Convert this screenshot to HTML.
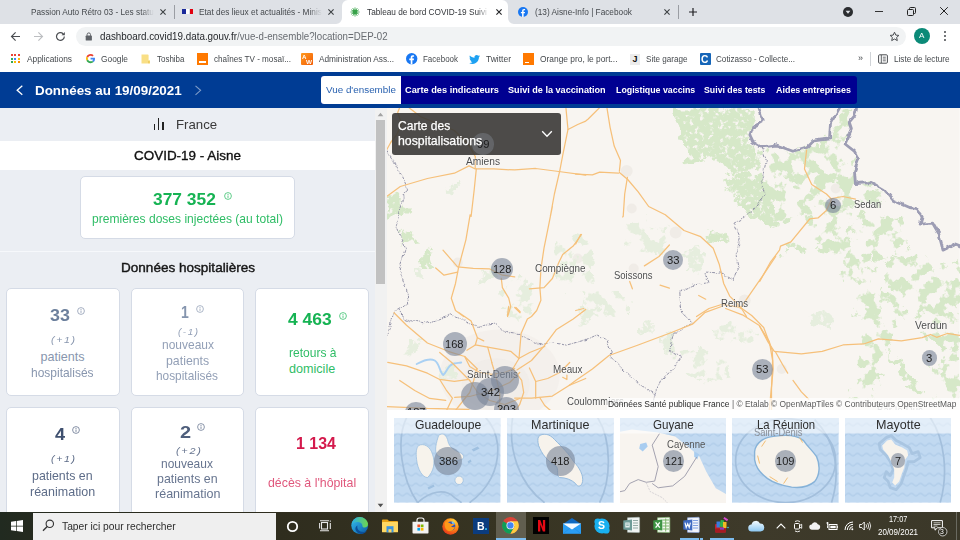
<!DOCTYPE html>
<html><head><meta charset="utf-8">
<style>
*{box-sizing:border-box;margin:0;padding:0}
html,body{width:960px;height:540px;overflow:hidden;background:#fff;font-family:"Liberation Sans",sans-serif;}
.a{position:absolute}
.t{position:absolute;white-space:nowrap;line-height:1}
.card{position:absolute;background:#fff;border:1px solid #d5dbe6;border-radius:5px}
.bub{position:absolute;border-radius:50%;background:rgba(122,134,154,.62)}
svg{overflow:visible}
</style></head><body>

<!-- ===== 10_chrome ===== -->
<div class="a" style="left:0px;top:0px;width:960px;height:24px;background:#dee1e6;"></div>
<div class="a" style="left:342px;top:0px;width:166px;height:24px;background:#fff;border-radius:6px 6px 0 0"></div>
<svg class="a" style="left:336px;top:18px;" width="6" height="6" viewBox="0 0 6 6"><path d="M6 0 V6 H0 A6 6 0 0 0 6 0Z" fill="#fff"/></svg>
<svg class="a" style="left:508px;top:18px;" width="6" height="6" viewBox="0 0 6 6"><path d="M0 0 V6 H6 A6 6 0 0 1 0 0Z" fill="#fff"/></svg>
<div class="t" style="left:31.00px;top:7.92px;font-size:8.6px;color:#45494d;transform:scaleX(0.9600);transform-origin:0 0;">Passion Auto Rétro 03 - Les statu</div>
<div class="a" style="left:141px;top:4px;width:13px;height:16px;background:linear-gradient(90deg,rgba(222,225,230,0),rgba(222,225,230,1));"></div>
<svg class="a" style="left:159px;top:8px;" width="8" height="8" viewBox="0 0 8 8"><path d="M1.4 1.4 L6.6 6.6 M6.6 1.4 L1.4 6.6" stroke="#3c4043" stroke-width="1.1" fill="none"/></svg>
<div class="a" style="left:173.5px;top:5px;width:1px;height:14px;background:#9a9da3;"></div>
<div class="a" style="left:182px;top:9.3px;width:4.2px;height:4.8px;background:#1b2a9a;"></div>
<div class="a" style="left:186.2px;top:9.3px;width:3.3px;height:4.8px;background:#fff;"></div>
<div class="a" style="left:189.5px;top:9.3px;width:3.9px;height:4.8px;background:#e1000f;"></div>
<div class="t" style="left:199.30px;top:7.92px;font-size:8.6px;color:#45494d;transform:scaleX(0.9638);transform-origin:0 0;">Etat des lieux et actualités - Minis</div>
<div class="a" style="left:309px;top:4px;width:13px;height:16px;background:linear-gradient(90deg,rgba(222,225,230,0),rgba(222,225,230,1));"></div>
<svg class="a" style="left:327px;top:8px;" width="8" height="8" viewBox="0 0 8 8"><path d="M1.4 1.4 L6.6 6.6 M6.6 1.4 L1.4 6.6" stroke="#3c4043" stroke-width="1.1" fill="none"/></svg>
<svg class="a" style="left:350.3px;top:7px;" width="10" height="10" viewBox="0 0 10 10"><line x1="5" y1="5" x2="9.60" y2="5.00" stroke="#3aa64a" stroke-width="0.8"/><line x1="5" y1="5" x2="8.98" y2="7.30" stroke="#3aa64a" stroke-width="0.8"/><line x1="5" y1="5" x2="7.30" y2="8.98" stroke="#3aa64a" stroke-width="0.8"/><line x1="5" y1="5" x2="5.00" y2="9.60" stroke="#3aa64a" stroke-width="0.8"/><line x1="5" y1="5" x2="2.70" y2="8.98" stroke="#3aa64a" stroke-width="0.8"/><line x1="5" y1="5" x2="1.02" y2="7.30" stroke="#3aa64a" stroke-width="0.8"/><line x1="5" y1="5" x2="0.40" y2="5.00" stroke="#3aa64a" stroke-width="0.8"/><line x1="5" y1="5" x2="1.02" y2="2.70" stroke="#3aa64a" stroke-width="0.8"/><line x1="5" y1="5" x2="2.70" y2="1.02" stroke="#3aa64a" stroke-width="0.8"/><line x1="5" y1="5" x2="5.00" y2="0.40" stroke="#3aa64a" stroke-width="0.8"/><line x1="5" y1="5" x2="7.30" y2="1.02" stroke="#3aa64a" stroke-width="0.8"/><line x1="5" y1="5" x2="8.98" y2="2.70" stroke="#3aa64a" stroke-width="0.8"/><circle cx="5" cy="5" r="2.4" fill="#37a148"/></svg>
<div class="t" style="left:367.30px;top:7.92px;font-size:8.6px;color:#33363a;transform:scaleX(0.9618);transform-origin:0 0;">Tableau de bord COVID-19 Suivi</div>
<div class="a" style="left:477px;top:4px;width:12px;height:16px;background:linear-gradient(90deg,rgba(255,255,255,0),rgba(255,255,255,1));"></div>
<svg class="a" style="left:495px;top:8px;" width="8" height="8" viewBox="0 0 8 8"><path d="M1.4 1.4 L6.6 6.6 M6.6 1.4 L1.4 6.6" stroke="#202124" stroke-width="1.1" fill="none"/></svg>
<svg class="a" style="left:518px;top:7px;" width="10" height="10" viewBox="0 0 10 10"><circle cx="5" cy="5" r="5" fill="#1877f2"/><path d="M5.6 10V6.3h1.2l.2-1.4H5.6V4c0-.4.1-.7.7-.7h.8V2.1c-.1 0-.6-.1-1.1-.1-1.1 0-1.9.7-1.9 1.9v1H2.9v1.4h1.2V10z" fill="#fff"/></svg>
<div class="t" style="left:535.00px;top:7.92px;font-size:8.6px;color:#45494d;transform:scaleX(0.9631);transform-origin:0 0;">(13) Aisne-Info | Facebook</div>
<svg class="a" style="left:663px;top:8px;" width="8" height="8" viewBox="0 0 8 8"><path d="M1.4 1.4 L6.6 6.6 M6.6 1.4 L1.4 6.6" stroke="#3c4043" stroke-width="1.1" fill="none"/></svg>
<div class="a" style="left:677.5px;top:5px;width:1px;height:14px;background:#9a9da3;"></div>
<svg class="a" style="left:688px;top:7px;" width="10" height="10" viewBox="0 0 10 10"><path d="M5 1V9M1 5H9" stroke="#202124" stroke-width="1.2"/></svg>
<svg class="a" style="left:843px;top:7px;" width="10" height="10" viewBox="0 0 10 10"><circle cx="5" cy="5" r="5" fill="#2b2d30"/><path d="M2.6 3.8h4.8L5 6.8z" fill="#dee1e6"/></svg>
<div class="a" style="left:875px;top:10.5px;width:8px;height:1px;background:#333;"></div>
<svg class="a" style="left:906px;top:6px;" width="11" height="11" viewBox="0 0 11 11"><rect x="1.5" y="3.5" width="6" height="6" rx="1" fill="none" stroke="#222" stroke-width="1"/><path d="M3.5 3.5V2.5a1 1 0 0 1 1-1H8.5a1 1 0 0 1 1 1V6.5a1 1 0 0 1-1 1H7.5" fill="none" stroke="#222" stroke-width="1"/></svg>
<svg class="a" style="left:939.5px;top:6.5px;" width="8" height="8" viewBox="0 0 8 8"><path d="M0.20000000000000018 0.20000000000000018 L7.8 7.8 M7.8 0.20000000000000018 L0.20000000000000018 7.8" stroke="#222" stroke-width="1" fill="none"/></svg>
<div class="a" style="left:0px;top:24px;width:960px;height:24px;background:#fff;"></div>
<div class="a" style="left:76px;top:26.6px;width:830px;height:19.5px;background:#f1f3f4;border-radius:10px"></div>
<svg class="a" style="left:10px;top:31px;" width="11" height="11" viewBox="0 0 11 11"><path d="M10 5.5H1.8M5.6 1.4L1.5 5.5l4.1 4.1" fill="none" stroke="#4a4d51" stroke-width="1.15"/></svg>
<svg class="a" style="left:33px;top:31px;" width="11" height="11" viewBox="0 0 11 11"><path d="M1 5.5H9.2M5.4 1.4L9.5 5.5 5.4 9.6" fill="none" stroke="#bcbec1" stroke-width="1.15"/></svg>
<svg class="a" style="left:55px;top:31px;" width="11" height="11" viewBox="0 0 11 11"><path d="M9.3 5.5a3.9 3.9 0 1 1-1.2-2.8" fill="none" stroke="#4a4d51" stroke-width="1.2"/><path d="M9.8 1v3.3H6.5z" fill="#4a4d51"/></svg>
<svg class="a" style="left:85px;top:31.5px;" width="8" height="9" viewBox="0 0 8 9"><rect x="0.7" y="3.6" width="6.2" height="5" rx=".7" fill="#5f6368"/><path d="M2.1 3.8V2.6a1.7 1.7 0 0 1 3.4 0v1.2" fill="none" stroke="#5f6368" stroke-width="1"/></svg>
<div class="t" style="left:100.00px;top:31.03px;font-size:10.6px;color:#25282c;transform:scaleX(0.9274);transform-origin:0 0;">dashboard.covid19.data.gouv.fr</div>
<div class="t" style="left:237.30px;top:31.03px;font-size:10.6px;color:#686c71;transform:scaleX(0.9150);transform-origin:0 0;">/vue-d-ensemble?location=DEP-02</div>
<svg class="a" style="left:888.5px;top:30.5px;" width="11" height="11" viewBox="0 0 11 11"><path d="M5.5 1.2l1.3 2.9 3.1.3-2.3 2.1.7 3.1-2.8-1.6-2.8 1.6.7-3.1L1.1 4.4l3.1-.3z" fill="none" stroke="#4a4d51" stroke-width="1"/></svg>
<svg class="a" style="left:914px;top:28px;" width="16" height="16" viewBox="0 0 16 16"><circle cx="8" cy="8" r="8" fill="#0b8a78"/></svg>
<div class="t" style="left:919.30px;top:32.23px;font-size:8px;color:#fff;transform:scaleX(1.0119);transform-origin:0 0;">A</div>
<div class="a" style="left:944px;top:31.4px;width:1.8px;height:1.8px;background:#4a4d51;border-radius:50%"></div>
<div class="a" style="left:944px;top:35.2px;width:1.8px;height:1.8px;background:#4a4d51;border-radius:50%"></div>
<div class="a" style="left:944px;top:39px;width:1.8px;height:1.8px;background:#4a4d51;border-radius:50%"></div>
<div class="a" style="left:0px;top:48px;width:960px;height:23px;background:#fff;"></div>
<div class="a" style="left:10.8px;top:54.3px;width:2.2px;height:2.2px;background:#ea4335;"></div>
<div class="a" style="left:14.3px;top:54.3px;width:2.2px;height:2.2px;background:#ea4335;"></div>
<div class="a" style="left:17.8px;top:54.3px;width:2.2px;height:2.2px;background:#ea4335;"></div>
<div class="a" style="left:10.8px;top:57.699999999999996px;width:2.2px;height:2.2px;background:#34a853;"></div>
<div class="a" style="left:14.3px;top:57.699999999999996px;width:2.2px;height:2.2px;background:#4285f4;"></div>
<div class="a" style="left:17.8px;top:57.699999999999996px;width:2.2px;height:2.2px;background:#fbbc04;"></div>
<div class="a" style="left:10.8px;top:61.099999999999994px;width:2.2px;height:2.2px;background:#34a853;"></div>
<div class="a" style="left:14.3px;top:61.099999999999994px;width:2.2px;height:2.2px;background:#fbbc04;"></div>
<div class="a" style="left:17.8px;top:61.099999999999994px;width:2.2px;height:2.2px;background:#fb8c00;"></div>
<div class="t" style="left:27.00px;top:55.05px;font-size:8.8px;color:#45494d;transform:scaleX(0.9483);transform-origin:0 0;">Applications</div>
<svg class="a" style="left:85.5px;top:54.3px;" width="9.2" height="9.2" viewBox="0 0 48 48"><path fill="#EA4335" d="M24 9.5c3.540 0 6.710 1.220 9.210 3.600l6.850-6.850C35.900 2.380 30.470 0 24 0 14.620 0 6.510 5.380 2.560 13.220l7.980 6.190C12.430 13.720 17.740 9.500 24 9.500z"/><path fill="#4285F4" d="M46.980 24.550c0-1.570-.15-3.090-.38-4.550H24v9.020h12.940c-.58 2.960-2.260 5.480-4.780 7.180l7.730 6c4.510-4.180 7.090-10.360 7.090-17.650z"/><path fill="#FBBC05" d="M10.530 28.590c-.48-1.450-.76-2.990-.76-4.590s.27-3.140.76-4.590l-7.980-6.190C.92 16.460 0 20.120 0 24c0 3.880.92 7.540 2.560 10.780l7.970-6.190z"/><path fill="#34A853" d="M24 48c6.480 0 11.930-2.130 15.890-5.810l-7.730-6c-2.150 1.450-4.920 2.300-8.160 2.300-6.260 0-11.570-4.220-13.470-9.910l-7.980 6.190C6.510 42.620 14.620 48 24 48z"/></svg>
<div class="t" style="left:101.00px;top:55.05px;font-size:8.8px;color:#45494d;transform:scaleX(0.9515);transform-origin:0 0;">Google</div>
<svg class="a" style="left:141px;top:54px;" width="9" height="10" viewBox="0 0 9 10"><path d="M0.5 0.5h6.3a.8.8 0 0 1 .8.8V6.2H9V9.5H.5z" fill="#f9df85"/><path d="M7.2 7h1.4v2.2H7.2z" fill="#edc95a"/></svg>
<div class="t" style="left:157.00px;top:55.05px;font-size:8.8px;color:#45494d;transform:scaleX(0.9066);transform-origin:0 0;">Toshiba</div>
<div class="a" style="left:197px;top:53.3px;width:11px;height:11.4px;background:#ff7900;"></div>
<div class="a" style="left:199px;top:61px;width:7px;height:1.6px;background:#fff;"></div>
<div class="t" style="left:214.00px;top:55.05px;font-size:8.8px;color:#45494d;transform:scaleX(0.9225);transform-origin:0 0;">chaînes TV - mosaï...</div>
<div class="a" style="left:301.3px;top:53.3px;width:11.7px;height:11.4px;background:linear-gradient(135deg,#ff9a1f,#f25c05);border-radius:1px"></div>
<div class="t" style="left:302.40px;top:54.22px;font-size:6px;color:#fff;font-weight:bold;transform:scaleX(1.0154);transform-origin:0 0;">A</div>
<div class="t" style="left:305.60px;top:58.72px;font-size:6px;color:#fff;font-weight:bold;transform:scaleX(1.0595);transform-origin:0 0;">W</div>
<div class="t" style="left:319.00px;top:55.05px;font-size:8.8px;color:#45494d;transform:scaleX(0.9408);transform-origin:0 0;">Administration Ass...</div>
<svg class="a" style="left:405.6px;top:53.3px;" width="11.4" height="11.4" viewBox="0 0 11.4 11.4"><circle cx="5.7" cy="5.7" r="5.7" fill="#1877f2"/><path d="M6.4 11.4V7.2h1.4l.2-1.6H6.4V4.6c0-.5.1-.8.8-.8h.9V2.4c-.2 0-.7-.1-1.3-.1-1.3 0-2.1.8-2.1 2.2v1.1H3.3v1.6h1.4v4.2z" fill="#fff"/></svg>
<div class="t" style="left:422.50px;top:55.05px;font-size:8.8px;color:#45494d;transform:scaleX(0.9056);transform-origin:0 0;">Facebook</div>
<svg class="a" style="left:469px;top:54.5px;" width="11" height="9" viewBox="0 0 11 9"><path d="M11 1.1c-.4.2-.8.3-1.3.4.5-.3.8-.7 1-1.2-.4.3-.9.4-1.4.5A2.2 2.2 0 0 0 5.500 2.800C3.600 2.700 2 1.800.9.500c-.6 1-.3 2.300.7 3-.4 0-.7-.1-1-.3 0 1.100.8 2 1.800 2.200-.3.100-.7.100-1 0 .3.900 1.100 1.500 2.100 1.500A4.500 4.500 0 0 1 .2 7.900 6.300 6.300 0 0 0 3.600 8.900c4.100 0 6.400-3.500 6.300-6.600.4-.3.800-.7 1.100-1.200z" fill="#1da1f2"/></svg>
<div class="t" style="left:486.00px;top:55.05px;font-size:8.8px;color:#45494d;transform:scaleX(0.9647);transform-origin:0 0;">Twitter</div>
<div class="a" style="left:523px;top:53.3px;width:11px;height:11.4px;background:#ff7900;"></div>
<div class="a" style="left:524.5px;top:62px;width:4px;height:1px;background:#fff;"></div>
<div class="t" style="left:539.50px;top:55.05px;font-size:8.8px;color:#45494d;transform:scaleX(0.9544);transform-origin:0 0;">Orange pro, le port...</div>
<div class="a" style="left:629.5px;top:53.5px;width:10.5px;height:11px;background:#ececec;"></div>
<div class="t" style="left:632.50px;top:54.78px;font-size:9px;color:#111;font-weight:bold;">J</div>
<div class="t" style="left:646.00px;top:55.05px;font-size:8.8px;color:#45494d;transform:scaleX(0.9220);transform-origin:0 0;">Site garage</div>
<div class="a" style="left:699.5px;top:53.3px;width:11px;height:11.4px;background:#1565b8;border-radius:1px"></div>
<div class="t" style="left:701.30px;top:54.11px;font-size:10.5px;color:#fff;font-weight:bold;transform:scaleX(0.9759);transform-origin:0 0;">C</div>
<div class="t" style="left:716.00px;top:55.05px;font-size:8.8px;color:#45494d;transform:scaleX(0.9230);transform-origin:0 0;">Cotizasso - Collecte...</div>
<div class="t" style="left:857.50px;top:53.46px;font-size:9.5px;color:#45494d;transform:scaleX(0.9463);transform-origin:0 0;">»</div>
<div class="a" style="left:870px;top:52px;width:1px;height:14px;background:#d0d3d7;"></div>
<svg class="a" style="left:877.5px;top:54px;" width="10" height="10" viewBox="0 0 10 10"><rect x=".6" y=".8" width="8.8" height="8.4" rx="1" fill="none" stroke="#4a4d51" stroke-width="1"/><path d="M3.3 1V9" stroke="#4a4d51" stroke-width=".9"/><path d="M4.8 3.200h3M4.800 5h3M4.800 6.800h3" stroke="#4a4d51" stroke-width=".8"/></svg>
<div class="t" style="left:894.00px;top:55.05px;font-size:8.8px;color:#45494d;transform:scaleX(0.9300);transform-origin:0 0;">Liste de lecture</div>

<!-- ===== 20_header ===== -->
<div class="a" style="left:0px;top:71px;width:960px;height:1px;background:#fff;"></div>
<div class="a" style="left:0px;top:72px;width:960px;height:35.5px;background:#003c94;"></div>
<svg class="a" style="left:16px;top:85px;" width="8" height="11" viewBox="0 0 8 11"><path d="M6.3 0.8L1.2 5.3l5.100 4.500" fill="none" stroke="#fff" stroke-width="1.3"/></svg>
<svg class="a" style="left:194px;top:85px;" width="8" height="11" viewBox="0 0 8 11"><path d="M1.500 0.8L6.600 5.300l-5.100 4.500" fill="none" stroke="#7f9dc9" stroke-width="1.1"/></svg>
<div class="t" style="left:35.00px;top:83.80px;font-size:13px;color:#fff;font-weight:bold;transform:scaleX(1.0305);transform-origin:0 0;">Données au 19/09/2021</div>
<div class="a" style="left:321px;top:75.6px;width:535.5px;height:28.6px;background:#000091;border-radius:3px"></div>
<div class="a" style="left:321.3px;top:75.6px;width:79.5px;height:28.6px;background:#fff;border-radius:3px 0 0 3px"></div>
<div class="t" style="left:326.00px;top:85.37px;font-size:9.6px;color:#2a62b0;transform:scaleX(1.0265);transform-origin:0 0;">Vue d'ensemble</div>
<div class="t" style="left:405.00px;top:85.37px;font-size:9.6px;color:#fff;font-weight:bold;transform:scaleX(0.9627);transform-origin:0 0;">Carte des indicateurs</div>
<div class="t" style="left:508.30px;top:85.37px;font-size:9.6px;color:#fff;font-weight:bold;transform:scaleX(0.9488);transform-origin:0 0;">Suivi de la vaccination</div>
<div class="t" style="left:615.70px;top:85.37px;font-size:9.6px;color:#fff;font-weight:bold;transform:scaleX(0.9176);transform-origin:0 0;">Logistique vaccins</div>
<div class="t" style="left:704.30px;top:85.37px;font-size:9.6px;color:#fff;font-weight:bold;transform:scaleX(0.9133);transform-origin:0 0;">Suivi des tests</div>
<div class="t" style="left:775.70px;top:85.37px;font-size:9.6px;color:#fff;font-weight:bold;transform:scaleX(0.9309);transform-origin:0 0;">Aides entreprises</div>

<!-- ===== 30_left ===== -->
<div class="a" style="left:0px;top:107.5px;width:375px;height:405px;background:#ebeef3;"></div>
<div class="a" style="left:153.7px;top:124px;width:1.4px;height:6.2px;background:#222;"></div>
<div class="a" style="left:158px;top:118.3px;width:1.4px;height:11.9px;background:#222;"></div>
<div class="a" style="left:162.4px;top:122px;width:1.4px;height:8.2px;background:#222;"></div>
<div class="t" style="left:175.50px;top:118.96px;font-size:12.8px;color:#3a3a3a;transform:scaleX(1.0342);transform-origin:0 0;">France</div>
<div class="a" style="left:0px;top:140.5px;width:375px;height:29.3px;background:#fff;"></div>
<div class="t" style="left:133.80px;top:149.33px;font-size:13.2px;color:#111;transform:scaleX(1.0200);transform-origin:0 0;-webkit-text-stroke:0.35px #111;">COVID-19 - Aisne</div>
<div class="card" style="left:80px;top:175.6px;width:214.5px;height:63px"></div>
<div class="t" style="left:153.00px;top:190.61px;font-size:17px;color:#16b353;font-weight:bold;transform:scaleX(1.0219);transform-origin:0 0;">377 352</div>
<svg class="a" style="left:222.5px;top:190.6px;" width="10" height="10" viewBox="0 0 10 10"><circle cx="5" cy="5" r="3.4" fill="none" stroke="#2fbd66" stroke-width=".75"/><path d="M5 4.500V6.900" stroke="#2fbd66" stroke-width=".8"/><circle cx="5" cy="3.400" r=".5" fill="#2fbd66"/></svg>
<div class="t" style="left:92.00px;top:212.63px;font-size:12.6px;color:#2fbd66;transform:scaleX(0.9569);transform-origin:0 0;">premières doses injectées (au total)</div>
<div class="a" style="left:0px;top:250.6px;width:375px;height:1.2px;background:#f6f8fb;"></div>
<div class="t" style="left:120.60px;top:260.66px;font-size:13.1px;color:#151515;transform:scaleX(1.0345);transform-origin:0 0;-webkit-text-stroke:0.4px #151515;">Données hospitalières</div>
<div class="card" style="left:5.8px;top:288.3px;width:113.9px;height:107.6px"></div>
<div class="card" style="left:5.8px;top:407.4px;width:113.9px;height:120px"></div>
<div class="card" style="left:130.5px;top:288.3px;width:113.9px;height:107.6px"></div>
<div class="card" style="left:130.5px;top:407.4px;width:113.9px;height:120px"></div>
<div class="card" style="left:255px;top:288.3px;width:113.9px;height:107.6px"></div>
<div class="card" style="left:255px;top:407.4px;width:113.9px;height:120px"></div>
<div class="t" style="left:49.90px;top:306.77px;font-size:17.4px;color:#6b7f9c;font-weight:bold;transform:scaleX(1.0282);transform-origin:0 0;">33</div>
<svg class="a" style="left:75.8px;top:305.9px;" width="10" height="10" viewBox="0 0 10 10"><circle cx="5" cy="5" r="3.4" fill="none" stroke="#8896ae" stroke-width=".75"/><path d="M5 4.500V6.900" stroke="#8896ae" stroke-width=".8"/><circle cx="5" cy="3.400" r=".5" fill="#8896ae"/></svg>
<div class="t" style="left:51.00px;top:334.96px;font-size:9.5px;color:#8896ae;font-style:italic;letter-spacing:1.5px;transform:scaleX(1.1097);transform-origin:0 0;">(+1)</div>
<div class="t" style="left:40.40px;top:351.33px;font-size:12.6px;color:#8896ae;">patients</div>
<div class="t" style="left:31.40px;top:366.73px;font-size:12.6px;color:#8896ae;transform:scaleX(0.9508);transform-origin:0 0;">hospitalisés</div>
<div class="t" style="left:180.50px;top:304.17px;font-size:17.4px;color:#8595ae;font-weight:bold;transform:scaleX(0.8060);transform-origin:0 0;">1</div>
<svg class="a" style="left:194.7px;top:303.7px;" width="10" height="10" viewBox="0 0 10 10"><circle cx="5" cy="5" r="3.4" fill="none" stroke="#929fb6" stroke-width=".75"/><path d="M5 4.500V6.900" stroke="#929fb6" stroke-width=".8"/><circle cx="5" cy="3.400" r=".5" fill="#929fb6"/></svg>
<div class="t" style="left:177.90px;top:326.96px;font-size:9.5px;color:#929fb6;font-style:italic;letter-spacing:1.5px;transform:scaleX(1.0349);transform-origin:0 0;">(-1)</div>
<div class="t" style="left:161.50px;top:338.93px;font-size:12.6px;color:#929fb6;transform:scaleX(0.9516);transform-origin:0 0;">nouveaux</div>
<div class="t" style="left:165.90px;top:354.53px;font-size:12.6px;color:#929fb6;transform:scaleX(0.9789);transform-origin:0 0;">patients</div>
<div class="t" style="left:156.25px;top:369.93px;font-size:12.6px;color:#929fb6;transform:scaleX(0.9417);transform-origin:0 0;">hospitalisés</div>
<div class="t" style="left:287.80px;top:311.17px;font-size:17.4px;color:#16b353;font-weight:bold;transform:scaleX(1.0036);transform-origin:0 0;">4 463</div>
<svg class="a" style="left:338px;top:310.8px;" width="10" height="10" viewBox="0 0 10 10"><circle cx="5" cy="5" r="3.4" fill="none" stroke="#2fbd66" stroke-width=".75"/><path d="M5 4.500V6.900" stroke="#2fbd66" stroke-width=".8"/><circle cx="5" cy="3.400" r=".5" fill="#2fbd66"/></svg>
<div class="t" style="left:288.50px;top:347.33px;font-size:12.6px;color:#2fbd66;transform:scaleX(0.9553);transform-origin:0 0;">retours à</div>
<div class="t" style="left:289.00px;top:362.83px;font-size:12.6px;color:#2fbd66;">domicile</div>
<div class="t" style="left:54.80px;top:426.07px;font-size:17.4px;color:#3f506f;font-weight:bold;transform:scaleX(1.0437);transform-origin:0 0;">4</div>
<svg class="a" style="left:70.9px;top:424.7px;" width="10" height="10" viewBox="0 0 10 10"><circle cx="5" cy="5" r="3.4" fill="none" stroke="#5d6c88" stroke-width=".75"/><path d="M5 4.500V6.900" stroke="#5d6c88" stroke-width=".8"/><circle cx="5" cy="3.400" r=".5" fill="#5d6c88"/></svg>
<div class="t" style="left:51.00px;top:454.16px;font-size:9.5px;color:#5d6c88;font-style:italic;letter-spacing:1.5px;transform:scaleX(1.1097);transform-origin:0 0;">(+1)</div>
<div class="t" style="left:32.20px;top:470.33px;font-size:12.6px;color:#5d6c88;transform:scaleX(0.9830);transform-origin:0 0;">patients en</div>
<div class="t" style="left:29.70px;top:485.53px;font-size:12.6px;color:#5d6c88;transform:scaleX(0.9918);transform-origin:0 0;">réanimation</div>
<div class="t" style="left:179.50px;top:423.67px;font-size:17.4px;color:#4f5f7c;font-weight:bold;transform:scaleX(1.1470);transform-origin:0 0;">2</div>
<svg class="a" style="left:195.7px;top:422.3px;" width="10" height="10" viewBox="0 0 10 10"><circle cx="5" cy="5" r="3.4" fill="none" stroke="#66748f" stroke-width=".75"/><path d="M5 4.500V6.900" stroke="#66748f" stroke-width=".8"/><circle cx="5" cy="3.400" r=".5" fill="#66748f"/></svg>
<div class="t" style="left:175.70px;top:446.26px;font-size:9.5px;color:#66748f;font-style:italic;letter-spacing:1.5px;transform:scaleX(1.1442);transform-origin:0 0;">(+2)</div>
<div class="t" style="left:161.30px;top:458.03px;font-size:12.6px;color:#66748f;transform:scaleX(0.9497);transform-origin:0 0;">nouveaux</div>
<div class="t" style="left:157.40px;top:472.93px;font-size:12.6px;color:#66748f;transform:scaleX(0.9830);transform-origin:0 0;">patients en</div>
<div class="t" style="left:154.50px;top:487.93px;font-size:12.6px;color:#66748f;transform:scaleX(0.9949);transform-origin:0 0;">réanimation</div>
<div class="t" style="left:296.00px;top:434.77px;font-size:17.4px;color:#d4194c;font-weight:bold;transform:scaleX(0.9186);transform-origin:0 0;">1 134</div>
<div class="t" style="left:268.00px;top:477.33px;font-size:12.6px;color:#e0577c;transform:scaleX(0.9803);transform-origin:0 0;">décès à l'hôpital</div>
<div class="a" style="left:375px;top:107.5px;width:12.3px;height:405px;background:#f1f1f1;"></div>
<div class="a" style="left:376.3px;top:120px;width:8.8px;height:164.3px;background:#c1c1c1;"></div>
<svg class="a" style="left:377px;top:111.5px;" width="7" height="5" viewBox="0 0 7 5"><path d="M3.5 0.800L6.300 4.200H0.700z" fill="#a3a3a3"/></svg>
<svg class="a" style="left:377px;top:503px;" width="7" height="5" viewBox="0 0 7 5"><path d="M3.500 4.200L6.300 0.800H0.700z" fill="#505050"/></svg>

<!-- ===== 40_map ===== -->
<svg class="a" style="left:387.3px;top:107.5px;overflow:hidden" width="572.7" height="302.7" viewBox="387.3 107.5 572.7 302.7"><defs>
<filter id="fz" x="-5%" y="-5%" width="110%" height="110%"><feTurbulence type="fractalNoise" baseFrequency="0.07" numOctaves="4" seed="7" result="n"/><feDisplacementMap in="SourceGraphic" in2="n" scale="22" xChannelSelector="R" yChannelSelector="G" result="d"/><feTurbulence type="fractalNoise" baseFrequency="0.2" numOctaves="3" seed="3" result="n2"/><feColorMatrix in="n2" type="matrix" values="0 0 0 0 0  0 0 0 0 0  0 0 0 0 0  0 0 0 -6 4.450" result="m"/><feComposite in="d" in2="m" operator="in"/></filter>
<filter id="fs" x="-5%" y="-5%" width="110%" height="110%"><feTurbulence type="fractalNoise" baseFrequency="0.07" numOctaves="4" seed="7" result="n"/><feDisplacementMap in="SourceGraphic" in2="n" scale="22" xChannelSelector="R" yChannelSelector="G" result="d"/><feTurbulence type="fractalNoise" baseFrequency="0.075" numOctaves="4" seed="5" result="n2"/><feColorMatrix in="n2" type="matrix" values="0 0 0 0 0  0 0 0 0 0  0 0 0 0 0  0 0 0 -14 7.100" result="m"/><feComposite in="d" in2="m" operator="in"/></filter>
<filter id="wz" x="-5%" y="-5%" width="110%" height="110%"><feTurbulence type="fractalNoise" baseFrequency="0.12" numOctaves="2" seed="11" result="n"/><feDisplacementMap in="SourceGraphic" in2="n" scale="5" xChannelSelector="R" yChannelSelector="G"/></filter>
</defs><rect x="387.3" y="107.5" width="572.7" height="302.7" fill="#f8f5f1"/><ellipse cx="500" cy="375" rx="60" ry="46" fill="#f0ece7" opacity=".45"/><ellipse cx="496" cy="384" rx="34" ry="26" fill="#eeeae5" opacity=".5"/><circle cx="627" cy="170.6" r="6" fill="#f0ece7"/><circle cx="632" cy="208" r="5" fill="#f0ece7"/><circle cx="458" cy="262" r="5" fill="#f0ece7"/><circle cx="782" cy="368.5" r="5" fill="#f0ece7"/><circle cx="676" cy="232" r="6" fill="#f0ece7"/><circle cx="634" cy="268" r="5" fill="#f0ece7"/><circle cx="745" cy="300" r="6" fill="#f0ece7"/><circle cx="836" cy="188" r="5" fill="#f0ece7"/><circle cx="578" cy="258" r="5" fill="#f0ece7"/><g filter="url(#fz)"><path d="M676.0 107.0 L742.0 107.0 L752.0 112.0 L752.0 125.0 L748.0 135.0 L755.0 148.0 L760.0 160.0 L757.0 170.0 L745.0 171.0 L735.0 172.0 L722.0 168.0 L715.0 158.0 L700.0 163.0 L687.0 160.0 L690.0 150.0 L681.0 140.0 L678.0 125.0Z" fill="#d6e8c8"/><path d="M722.0 176.0 L740.0 172.0 L760.0 178.0 L776.0 190.0 L776.0 216.0 L755.0 216.0 L748.0 205.0 L735.0 200.0 L728.0 188.0Z" fill="#d6e8c8"/><path d="M783.0 247.0 L800.0 245.0 L812.0 250.0 L800.0 255.0 L785.0 253.0Z" fill="#d6e8c8"/><path d="M893.0 352.0 L900.0 360.0 L912.0 380.0 L922.0 393.0 L918.0 396.0 L905.0 382.0 L892.0 360.0Z" fill="#d6e8c8"/><path d="M812.0 312.0 L835.0 312.0 L834.0 327.0 L815.0 326.0Z" fill="#e6eede"/><path d="M713.0 231.0 L728.0 230.0 L730.0 242.0 L718.0 245.0 L713.0 240.0Z" fill="#d6e8c8"/><path d="M755.0 206.0 L776.0 206.0 L776.0 222.0 L762.0 223.0 L756.0 214.0Z" fill="#d6e8c8"/><path d="M398.0 206.0 L413.0 206.0 L412.0 214.0 L400.0 214.0Z" fill="#d6e8c8"/><path d="M400.0 227.0 L412.0 228.0 L415.0 240.0 L404.0 241.0Z" fill="#d6e8c8"/><path d="M421.0 253.0 L432.0 251.0 L434.0 266.0 L424.0 268.0Z" fill="#d6e8c8"/><path d="M414.0 271.0 L424.0 270.0 L424.0 282.0 L415.0 281.0Z" fill="#e6eede"/><path d="M386.0 196.0 L400.0 195.0 L407.0 205.0 L400.0 216.0 L386.0 216.0Z" fill="#d6e8c8"/><path d="M449.0 183.0 L460.0 181.0 L461.0 188.0 L450.0 190.0Z" fill="#e6eede"/><path d="M478.0 271.0 L493.0 270.0 L494.0 280.0 L480.0 281.0Z" fill="#e6eede"/><path d="M684.0 250.0 L700.0 247.0 L705.0 262.0 L700.0 273.0 L687.0 270.0Z" fill="#e6eede"/><path d="M576.0 306.0 L596.0 306.0 L594.0 322.0 L578.0 322.0Z" fill="#e6eede"/><path d="M640.0 322.0 L655.0 322.0 L655.0 333.0 L641.0 333.0Z" fill="#e6eede"/><path d="M661.0 334.0 L676.0 333.0 L676.0 356.0 L663.0 355.0Z" fill="#e6eede"/><path d="M405.0 340.0 L420.0 338.0 L422.0 352.0 L406.0 352.0Z" fill="#e6eede"/><path d="M440.0 366.0 L455.0 364.0 L456.0 378.0 L442.0 378.0Z" fill="#e6eede"/></g><g filter="url(#fs)"><path d="M760.0 146.0 L775.0 146.0 L793.0 152.0 L808.0 148.0 L815.0 141.0 L830.0 139.0 L832.0 125.0 L838.0 113.0 L842.0 107.0 L855.0 107.0 L852.0 118.0 L848.0 124.0 L850.0 130.0 L845.0 143.0 L853.0 151.0 L858.0 159.0 L854.0 171.0 L855.0 183.0 L872.0 183.0 L880.0 190.0 L885.0 200.0 L875.0 210.0 L860.0 216.0 L760.0 216.0Z" fill="#d6e8c8"/><path d="M760.0 206.0 L787.0 206.0 L785.0 218.0 L775.0 226.0 L762.0 222.0Z" fill="#d6e8c8"/><path d="M808.0 218.0 L830.0 214.0 L850.0 216.0 L858.0 230.0 L852.0 245.0 L840.0 256.0 L825.0 250.0 L812.0 238.0Z" fill="#d6e8c8"/><path d="M839.0 250.0 L860.0 247.0 L875.0 260.0 L872.0 278.0 L858.0 285.0 L842.0 275.0Z" fill="#d6e8c8"/><path d="M855.0 216.0 L880.0 214.0 L900.0 222.0 L906.0 240.0 L895.0 256.0 L875.0 258.0 L860.0 240.0Z" fill="#d6e8c8"/><path d="M885.0 262.0 L905.0 254.0 L930.0 258.0 L960.0 262.0 L960.0 316.0 L925.0 316.0 L905.0 300.0 L890.0 285.0Z" fill="#d6e8c8"/><path d="M854.0 292.0 L875.0 287.0 L895.0 295.0 L906.0 316.0 L856.0 316.0Z" fill="#d6e8c8"/><path d="M858.0 306.0 L897.0 306.0 L895.0 330.0 L890.0 350.0 L885.0 375.0 L870.0 398.0 L850.0 398.0 L862.0 375.0 L860.0 350.0 L862.0 328.0Z" fill="#d6e8c8"/><path d="M916.0 306.0 L960.0 306.0 L960.0 398.0 L935.0 398.0 L930.0 375.0 L940.0 352.0 L925.0 335.0 L918.0 320.0Z" fill="#d6e8c8"/><path d="M555.0 240.0 L575.0 235.0 L592.0 240.0 L592.0 270.0 L585.0 290.0 L565.0 293.0 L556.0 275.0Z" fill="#e6eede"/><path d="M502.0 282.0 L520.0 279.0 L536.0 290.0 L534.0 316.0 L505.0 316.0Z" fill="#e6eede"/><path d="M623.0 224.0 L645.0 220.0 L665.0 228.0 L666.0 248.0 L650.0 256.0 L630.0 250.0Z" fill="#e6eede"/><path d="M576.0 250.0 L592.0 248.0 L592.0 285.0 L578.0 289.0Z" fill="#e6eede"/><path d="M582.0 292.0 L610.0 289.0 L630.0 298.0 L628.0 316.0 L584.0 316.0Z" fill="#e6eede"/><path d="M709.0 322.0 L735.0 318.0 L757.0 325.0 L755.0 342.0 L730.0 343.0 L712.0 338.0Z" fill="#e6eede"/><path d="M684.0 352.0 L710.0 348.0 L730.0 358.0 L728.0 378.0 L700.0 381.0 L686.0 370.0Z" fill="#e6eede"/></g><path d="M417 363.500 C424 360 430 357.500 435 360 C440 363 440 372 443.500 374.500 C447 372 448 365 453 363.500 C456 362.500 459 362.500 461.500 362" fill="none" stroke="#a9d0f3" stroke-width="1.900" stroke-linecap="round"/><g filter="url(#wz)" fill="none" stroke="#8d8da3" stroke-width=".950" stroke-dasharray="3 1 1 1" stroke-linejoin="round"><path d="M387.0 150.8 L398.5 168.5 L406.8 189.3 L402.7 199.7 L399.5 210.0 L396.4 226.8 L406.8 247.7 L399.5 268.5 L406.8 289.3 L409.0 304.0 L398.5 308.0 L394.3 312.2 L388.0 334.0"/><path d="M398.5 308.0 L404.7 319.5 L427.7 322.7 L450.6 314.3 L469.3 322.7 L477.7 325.8 L494.3 323.7 L511.0 333.0 L519.3 334.0 L527.7 339.3 L544.3 344.5 L552.7 342.5 L567.2 344.5 L586.0 339.3 L594.7 335.0 L607.2 339.3 L611.4 351.8 L609.3 356.0 L628.0 372.7 L640.6 385.0 L655.0 393.5"/><path d="M762.5 147.0 L766.6 160.0 L761.4 183.0 L765.6 193.5 L757.2 206.0 L745.0 217.0 L734.3 222.7 L740.6 237.2 L736.4 254.0 L738.5 268.5 L734.3 280.0 L721.8 272.7 L705.0 271.6 L709.3 282.0 L692.7 285.0 L679.0 291.4 L680.0 304.0 L682.0 312.0 L692.7 322.7 L674.0 333.0 L669.7 349.7 L682.2 356.0 L674.0 368.5 L661.4 379.0 L655.0 393.5 L652.0 411.0"/></g><g fill="none" stroke="#f6c07a" stroke-width="1.250" stroke-linejoin="round" stroke-linecap="round"><path d="M386.0 196.6 L400.6 186.0 L427.7 178.0 L454.7 172.7 L469.3 165.4 L475.6 168.5 L494.3 168.5 L515.0 169.5 L536.0 168.0 L559.0 171.0 L586.0 174.7"/><path d="M409.0 107.0 L421.4 116.4 L454.7 130.0 L468.0 143.0 L475.6 156.0 L475.5 168.0"/><path d="M386.0 151.0 L391.0 142.0 L396.4 135.0 L402.0 124.0 L398.0 112.0 L400.0 107.0"/><path d="M476.6 168.5 L474.5 189.3 L471.4 216.0 L470.4 214.3 L466.2 239.3 L459.0 266.4 L455.8 283.0 L451.6 297.7 L455.8 310.0 L464.0 316.0 L459.0 312.0 L471.4 320.6 L477.7 337.2 L475.6 344.5 L467.2 349.7"/><path d="M566.2 107.0 L568.3 129.0 L563.0 155.0 L560.0 170.6 L554.7 193.5 L550.6 216.0 L552.7 206.0 L548.5 226.8 L544.3 247.7 L541.2 268.5 L540.2 287.2 L541.2 299.7 L537.0 310.0 L531.8 316.0 L527.7 318.5 L521.4 333.0 L519.3 358.0"/><path d="M568.3 129.0 L578.0 124.0 L586.0 120.6 L588.5 118.5 L600.0 107.0"/><path d="M607.2 107.0 L610.4 126.8 L614.5 145.6 L620.8 160.0 L619.7 170.6"/><path d="M576.0 173.7 L592.7 174.3 L600.0 171.6 L618.7 172.7"/><path d="M619.7 172.0 L628.0 179.0 L638.5 191.4 L649.0 206.0 L665.6 214.3 L684.3 230.0 L701.0 236.2 L713.5 247.7 L719.7 264.3 L724.0 283.0 L730.0 295.6 L740.6 306.0 L746.8 316.0"/><path d="M627.7 176.8 L625.0 193.5 L623.5 216.0 L622.9 216.4"/><path d="M443.3 249.7 L457.9 266.4 L473.5 268.0 L490.0 268.5 L502.7 274.7 L515.0 276.4"/><path d="M436.0 267.5 L444.3 274.7 L457.9 271.6"/><path d="M501.6 278.0 L502.7 287.2 L509.0 297.7 L511.0 306.0 L507.9 316.0 L507.9 314.3"/><path d="M581.8 234.0 L573.5 245.6 L563.0 254.0 L559.0 262.2 L552.7 278.0 L544.3 287.2 L529.7 288.3"/><path d="M515.0 307.0 L520.4 312.2"/><path d="M644.7 265.4 L659.3 256.0 L669.7 244.5"/><path d="M630.0 281.0 L632.7 288.3"/><path d="M660.4 284.7 L669.7 287.7"/><path d="M699.0 295.0 L706.0 298.7"/><path d="M576.0 243.5 L581.0 234.0"/><path d="M576.0 310.0 L584.0 308.0"/><path d="M776.0 256.0 L763.5 274.7 L749.0 295.6 L740.6 308.0"/><path d="M740.6 307.0 L721.8 304.0 L709.3 308.0 L696.8 316.0"/><path d="M721.8 306.0 L705.0 312.2 L692.7 323.7 L671.8 332.0 L638.5 344.5 L609.3 355.0 L592.7 368.5 L576.0 380.0 L569.3 385.0 L552.7 395.6 L531.8 397.7 L515.0 397.7"/><path d="M726.0 308.0 L742.7 314.3 L759.3 324.7 L769.7 341.4 L772.9 360.0 L771.8 389.3 L771.8 411.0"/><path d="M738.0 305.0 L752.0 315.0 L764.0 327.0 L772.5 349.7 L773.5 368.5 L771.5 389.3 L769.4 411.0"/><path d="M760.0 325.8 L768.3 341.4 L774.6 350.8 L801.7 353.5 L822.5 350.8 L843.3 344.5 L864.0 343.5 L878.7 338.3 L901.7 340.4 L922.5 337.2 L930.8 334.0 L937.0 336.8 L947.5 333.0 L960.0 335.0"/><path d="M775.6 351.0 L783.0 364.3 L788.0 372.7"/><path d="M793.3 380.0 L801.7 391.4 L809.0 398.7"/><path d="M806.9 149.7 L804.8 168.5 L812.0 184.0 L826.7 193.5 L831.9 198.7 L826.7 210.0 L818.3 217.5 L810.0 218.5 L791.2 241.4 L780.8 245.6 L779.8 249.7 L770.4 262.2 L760.0 281.0"/><path d="M832.0 198.0 L843.3 196.0 L855.8 198.7"/><path d="M388.0 361.8 L406.8 365.4 L427.7 372.7 L440.0 379.0 L454.7 381.0 L469.3 379.0"/><path d="M394.3 312.2 L406.8 324.7 L427.7 342.5 L448.5 350.8 L465.0 356.0 L477.7 368.5"/><path d="M477.7 337.2 L484.0 340.4"/><path d="M475.6 344.5 L488.0 346.6 L492.2 362.2"/><path d="M488.0 346.6 L511.0 350.8 L519.3 358.0 L513.0 368.5"/><path d="M586.0 309.0 L573.5 318.5 L556.8 329.0 L544.3 345.6 L531.8 360.0 L517.2 369.5"/><path d="M586.0 378.0 L569.3 385.0"/><path d="M529.7 367.5 L536.0 381.0 L536.0 397.7"/><path d="M386.0 406.0 L427.7 408.0 L469.3 409.0"/><path d="M440.0 379.0 L446.4 389.3 L452.7 397.7 L446.4 411.0"/><path d="M509.0 306.0 L507.9 314.3"/><path d="M516.2 307.0 L520.4 311.2"/><path d="M563.0 376.8 L567.2 379.0 L567.2 374.7"/><path d="M470.0 380.0 L478.0 392.0 L490.0 400.0 L505.0 404.0 L520.0 398.0"/><path d="M455.0 397.0 L470.0 396.0 L492.0 390.0 L510.0 382.0 L520.0 372.0"/><path d="M492.0 362.0 L496.0 375.0 L500.0 392.0 L500.0 411.0"/><path d="M465.0 356.0 L470.0 366.0 L480.0 372.0 L492.0 374.0 L505.0 372.0 L515.0 368.0"/><path d="M477.0 368.0 L474.0 380.0 L470.0 392.0 L462.0 402.0 L455.0 411.0"/><path d="M513.0 368.0 L522.0 380.0 L524.0 392.0 L520.0 404.0 L515.0 411.0"/><path d="M440.0 352.0 L452.0 362.0 L462.0 372.0 L470.0 380.0"/><path d="M536.0 381.0 L548.0 378.0 L560.0 372.0 L570.0 362.0"/><path d="M519.0 358.0 L530.0 352.0 L545.0 346.0"/><path d="M400.0 380.0 L415.0 390.0 L430.0 398.0 L446.0 400.0"/><path d="M540.0 397.0 L545.0 405.0 L552.0 411.0"/></g><g filter="url(#wz)" fill="none" stroke="#9d9db4" stroke-width="2.800" stroke-linejoin="round"><path d="M759.3 107.0 L763.5 120.6 L753.0 126.8 L750.0 135.0 L753.0 141.4 L761.4 146.6 L776.0 144.5 L774.6 144.0 L793.3 150.8 L808.0 146.6 L814.0 140.4 L829.8 138.3 L830.8 122.7 L836.0 114.3 L840.0 107.0"/><path d="M856.9 107.0 L854.8 116.4 L849.6 122.7 L851.7 129.0 L845.4 143.5 L854.8 150.8 L859.0 159.0 L854.8 170.6 L855.8 183.0 L872.5 182.0 L885.0 189.3 L893.3 199.7 L910.0 207.0 L916.2 208.0 L922.5 216.4 L920.4 223.7 L933.0 222.7 L939.0 233.0 L943.3 249.7 L955.8 243.5 L961.0 245.6"/></g></svg>
<div class="t" style="left:466.20px;top:155.18px;font-size:11.6px;color:#4d4d4d;transform:scaleX(0.8790);transform-origin:0 0;text-shadow:0 0 1.5px #fff,0 0 1.5px #fff;">Amiens</div>
<div class="t" style="left:535.00px;top:261.78px;font-size:11.6px;color:#4d4d4d;transform:scaleX(0.8512);transform-origin:0 0;text-shadow:0 0 1.5px #fff,0 0 1.5px #fff;">Compiègne</div>
<div class="t" style="left:613.50px;top:269.18px;font-size:11.6px;color:#4d4d4d;transform:scaleX(0.8179);transform-origin:0 0;text-shadow:0 0 1.5px #fff,0 0 1.5px #fff;">Soissons</div>
<div class="t" style="left:721.40px;top:296.78px;font-size:11.6px;color:#4d4d4d;transform:scaleX(0.8245);transform-origin:0 0;text-shadow:0 0 1.5px #fff,0 0 1.5px #fff;">Reims</div>
<div class="t" style="left:853.70px;top:197.88px;font-size:11.6px;color:#4d4d4d;transform:scaleX(0.8079);transform-origin:0 0;text-shadow:0 0 1.5px #fff,0 0 1.5px #fff;">Sedan</div>
<div class="t" style="left:915.20px;top:318.68px;font-size:11.6px;color:#4d4d4d;transform:scaleX(0.8785);transform-origin:0 0;text-shadow:0 0 1.5px #fff,0 0 1.5px #fff;">Verdun</div>
<div class="t" style="left:552.70px;top:363.18px;font-size:11.6px;color:#4d4d4d;transform:scaleX(0.8473);transform-origin:0 0;text-shadow:0 0 1.5px #fff,0 0 1.5px #fff;">Meaux</div>
<div class="t" style="left:466.80px;top:368.18px;font-size:11.6px;color:#4d4d4d;transform:scaleX(0.8489);transform-origin:0 0;text-shadow:0 0 1.5px #fff,0 0 1.5px #fff;">Saint-Denis</div>
<div class="t" style="left:567.20px;top:395.18px;font-size:11.6px;color:#4d4d4d;transform:scaleX(0.8313);transform-origin:0 0;text-shadow:0 0 1.5px #fff,0 0 1.5px #fff;">Coulommiers</div>
<div class="t" style="left:876.70px;top:404.18px;font-size:11.6px;color:#999;transform:scaleX(0.8262);transform-origin:0 0;text-shadow:0 0 1.5px #fff,0 0 1.5px #fff;">Bar-le-Duc</div>
<div class="a" style="left:387.3px;top:107.5px;width:572.7px;height:302.7px;overflow:hidden"><div class="a" style="left:-387.3px;top:-107.5px;width:960px;height:540px">
<div class="bub" style="left:472.0px;top:132.9px;width:21.8px;height:21.8px"></div>
<div class="t" style="left:476.65px;top:138.76px;font-size:11.8px;color:#1f1f1f;transform:scaleX(0.9523);transform-origin:0 0;">99</div>
<div class="bub" style="left:490.7px;top:257.5px;width:22.6px;height:22.6px"></div>
<div class="t" style="left:492.85px;top:263.76px;font-size:11.8px;color:#1f1f1f;transform:scaleX(0.9295);transform-origin:0 0;">128</div>
<div class="bub" style="left:663.0px;top:250.1px;width:19.8px;height:19.8px"></div>
<div class="t" style="left:666.65px;top:254.96px;font-size:11.8px;color:#1f1f1f;transform:scaleX(0.9523);transform-origin:0 0;">33</div>
<div class="bub" style="left:825.2px;top:197.5px;width:15.6px;height:15.6px"></div>
<div class="t" style="left:829.85px;top:200.26px;font-size:11.8px;color:#1f1f1f;transform:scaleX(0.9600);transform-origin:0 0;">6</div>
<div class="bub" style="left:442.7px;top:332.3px;width:24.0px;height:24.0px"></div>
<div class="t" style="left:445.45px;top:339.26px;font-size:11.8px;color:#1f1f1f;transform:scaleX(0.9396);transform-origin:0 0;">168</div>
<div class="bub" style="left:490.7px;top:366.3px;width:28.0px;height:28.0px"></div>
<div class="bub" style="left:460.5px;top:381.9px;width:28.0px;height:28.0px"></div>
<div class="bub" style="left:476.0px;top:378.1px;width:28.0px;height:28.0px"></div>
<div class="t" style="left:480.50px;top:387.06px;font-size:11.8px;color:#1f1f1f;transform:scaleX(0.9650);transform-origin:0 0;">342</div>
<div class="bub" style="left:494.3px;top:396.8px;width:25.0px;height:25.0px"></div>
<div class="t" style="left:497.30px;top:404.26px;font-size:11.8px;color:#1f1f1f;transform:scaleX(0.9650);transform-origin:0 0;">203</div>
<div class="bub" style="left:405.3px;top:401.6px;width:21.8px;height:21.8px"></div>
<div class="t" style="left:406.95px;top:407.46px;font-size:11.8px;color:#1f1f1f;transform:scaleX(0.9396);transform-origin:0 0;">187</div>
<div class="bub" style="left:751.5px;top:358.8px;width:21.0px;height:21.0px"></div>
<div class="t" style="left:755.75px;top:364.26px;font-size:11.8px;color:#1f1f1f;transform:scaleX(0.9523);transform-origin:0 0;">53</div>
<div class="bub" style="left:921.6px;top:350.0px;width:15.6px;height:15.6px"></div>
<div class="t" style="left:926.25px;top:352.76px;font-size:11.8px;color:#1f1f1f;transform:scaleX(0.9600);transform-origin:0 0;">3</div>
</div></div>
<div class="a" style="left:392.25px;top:113.3px;width:168.4px;height:41.7px;background:rgba(58,56,54,.9);border-radius:3px"></div>
<div class="a" style="left:472.2px;top:133px;width:21.6px;height:21.6px;background:rgba(170,176,188,.3);border-radius:50%"></div>
<div class="t" style="left:476.75px;top:138.61px;font-size:11.8px;color:rgba(12,12,12,.8);transform:scaleX(0.9523);transform-origin:0 0;">99</div>
<div class="t" style="left:398.00px;top:119.67px;font-size:12.2px;color:#fff;transform:scaleX(0.9869);transform-origin:0 0;-webkit-text-stroke:.25px #fff;">Carte des</div>
<div class="t" style="left:398.00px;top:134.67px;font-size:12.2px;color:#fff;transform:scaleX(1.0106);transform-origin:0 0;-webkit-text-stroke:.25px #fff;">hospitalisations</div>
<svg class="a" style="left:541px;top:129.5px;" width="12" height="8.5" viewBox="0 0 12 8.5"><path d="M1.200 1.300L6 6.300 10.800 1.300" fill="none" stroke="#fff" stroke-width="1.300"/></svg>
<div class="a" style="left:607px;top:398px;width:353px;height:12.2px;background:rgba(255,255,255,.72);"></div>
<div class="t" style="left:607.50px;top:399.72px;font-size:8.6px;color:#2a2a2a;transform:scaleX(0.9850);transform-origin:0 0;">Données Santé publique France</div>
<div class="t" style="left:731.50px;top:399.72px;font-size:8.6px;color:#5a5a5a;transform:scaleX(0.9748);transform-origin:0 0;">| © Etalab © OpenMapTiles © Contributeurs OpenStreetMap</div>

<!-- ===== 50_doms ===== -->
<div class="a" style="left:387.3px;top:410.2px;width:572.7px;height:102px;background:#fff;"></div>
<svg class="a" style="left:394.4px;top:418.4px;overflow:hidden" width="106.4" height="84.6" viewBox="394.4 418.4 106.4 84.6"><defs><pattern id="wv" width="9" height="10" patternUnits="userSpaceOnUse"><path d="M0 5 Q2.250 2.500 4.500 5 T9 5" fill="none" stroke="#aac8e6" stroke-width="1.100"/></pattern></defs><rect x="394.4" y="418.4" width="106.4" height="84.6" fill="#c1d9f1"/><rect x="394.4" y="418.4" width="106.4" height="84.6" fill="url(#wv)"/><path d="M407 418 C396 440 402 480 418 503 M418 503 C430 492 445 488 455 498 L462 503 M470 503 C488 490 500 470 498 445 C496 430 490 422 486 418" fill="none" stroke="#a3bfdc" stroke-width="1.700"/><path d="M419 446 C424 443 431 447 433 455 C436 463 434 472 428 478 C423 478 418 470 417 460 C416 452 417 448 419 446Z" fill="#f7f3ec" stroke="#9cbfdf" stroke-width=".8"/><path d="M439 436 C442 433 446 434 448 440 C449 446 452 449 458 452 C464 454 466 458 462 460 C455 462 445 460 438 456 C434 452 437 442 439 436Z" fill="#f7f3ec" stroke="#9cbfdf" stroke-width=".8"/><circle cx="459.500" cy="480.700" r="4.200" fill="#f7f3ec" stroke="#9cbfdf" stroke-width=".8"/><path d="M472 450l6-3 2 2-6 3zM468 462l3-2 1 2-3 2zM428 488l6-3 1 2-6 3z" fill="#9fc0e0"/><rect x="394.4" y="418.4" width="106.4" height="15.500" fill="#fff" opacity=".55"/></svg>
<svg class="a" style="left:507.4px;top:418.4px;overflow:hidden" width="106.6" height="84.6" viewBox="507.4 418.4 106.6 84.6"><rect x="507.4" y="418.4" width="106.6" height="84.6" fill="#c1d9f1"/><rect x="507.4" y="418.4" width="106.6" height="84.6" fill="url(#wv)"/><path d="M513 418 C508 450 520 485 545 503 M600 503 C612 480 612 440 598 418" fill="none" stroke="#a3bfdc" stroke-width="1.700"/><path d="M539 437 C543 433 550 434 555 440 C562 447 570 455 574 462 C580 468 584 476 583 482 C582 487 578 488 576 484 C572 480 566 478 560 478 C556 476 560 470 556 466 C548 462 542 454 539 446 C538 442 538 439 539 437Z" fill="#f7f3ec" stroke="#8fb6da" stroke-width=".9"/><rect x="507.4" y="418.4" width="106.6" height="15.500" fill="#fff" opacity=".55"/></svg>
<svg class="a" style="left:619.8px;top:418.4px;overflow:hidden" width="106.6" height="84.6" viewBox="619.8 418.4 106.6 84.6"><rect x="619.8" y="418.4" width="106.6" height="84.6" fill="#c1d9f1"/><rect x="619.8" y="418.4" width="106.6" height="84.6" fill="url(#wv)"/><path d="M619 432.400 L631.800 430 L658 433 L675 437 L691.700 450.300 L698.900 456.300 L706 472 L715.600 488.700 L726.400 494.700 L727 504 L619 504Z" fill="#f8f4ef"/><path d="M640 444.500l6-1.500 1.500 4-5 5-3.500-3z" fill="#a9cdf0"/><path d="M694 452l5 3-2 5-3-3z" fill="#a9cdf0"/><path d="M659.300 434 L652 445.500 L658 467 L654.500 481.500 L646 482.700 L638 480 L629.400 483.900 L624.600 491 L619 492.300" fill="none" stroke="#9a98a8" stroke-width=".9"/><path d="M696.500 457.500 L684.500 476.700 L672.500 486.300 L658 488.200 L652 483.900" fill="none" stroke="#9a98a8" stroke-width=".9"/><path d="M646 483 L650 492 L662 498 L668 504" fill="none" stroke="#c9c6cc" stroke-width=".7" stroke-dasharray="2 1"/><rect x="619.8" y="418.4" width="106.6" height="15.500" fill="#fff" opacity=".55"/></svg>
<svg class="a" style="left:732.4px;top:418.4px;overflow:hidden" width="106.6" height="84.6" viewBox="732.4 418.4 106.6 84.6"><rect x="732.4" y="418.4" width="106.6" height="84.6" fill="#c1d9f1"/><rect x="732.4" y="418.4" width="106.6" height="84.6" fill="url(#wv)"/><ellipse cx="786" cy="461" rx="50" ry="42" fill="none" stroke="#a3bfdc" stroke-width="1.700"/><path d="M815 420 C835 440 842 470 832 503" fill="none" stroke="#a3bfdc" stroke-width="1.700"/><path d="M755 452 C756 443 765 437 776 436.500 C787 435 798 436 804 441 C808 447 813 451 817 457 C821 466 820 476 815 482 C809 487 800 488.500 792 487.500 C783 486 775 484 768 479 C761 474 756 467 755 460Z" fill="#f7f3ec" stroke="#86b2d8" stroke-width="1.400"/><path d="M762 447 L766 441 M758 456 L760 464 M770 477 L778 482 M784 484 L788 478 M800 438 L803 443" stroke="#f2b866" stroke-width=".9" fill="none"/><rect x="732.4" y="418.4" width="106.6" height="15.500" fill="#fff" opacity=".55"/></svg>
<svg class="a" style="left:844.8px;top:418.4px;overflow:hidden" width="106.5" height="84.6" viewBox="844.8 418.4 106.5 84.6"><rect x="844.8" y="418.4" width="106.5" height="84.6" fill="#c1d9f1"/><rect x="844.8" y="418.4" width="106.5" height="84.6" fill="url(#wv)"/><path d="M930 418 C945 440 948 475 940 503" fill="none" stroke="#a3bfdc" stroke-width="1.700"/><path d="M886 438 L891 436 L896 441 L902 444 L909 448 L912 454 L918 452 L920 458 L914 462 L908 462 L906 470 L903 478 L901 484 L896 490 L890 488 L888 482 L884 478 L886 472 L890 476 L893 470 L890 462 L886 456 L880 450 L879 444Z" fill="none" stroke="#a9c5e1" stroke-width="2.800" stroke-linejoin="round"/><path d="M887 441 L891 440 L895 445 L902 448 L907 451 L908 456 L905 460 L904 468 L901 476 L899 482 L895 486 L892 483 L894 478 L894 470 L891 462 L888 456 L883 450 L882 446Z" fill="#f7f3ec"/><rect x="844.8" y="418.4" width="106.5" height="15.500" fill="#fff" opacity=".55"/></svg>
<div class="t" style="left:414.70px;top:418.65px;font-size:12.7px;color:#2e2e2e;transform:scaleX(0.9580);transform-origin:0 0;">Guadeloupe</div>
<div class="t" style="left:531.40px;top:418.65px;font-size:12.7px;color:#2e2e2e;transform:scaleX(0.9882);transform-origin:0 0;">Martinique</div>
<div class="t" style="left:652.90px;top:418.65px;font-size:12.7px;color:#2e2e2e;transform:scaleX(0.9150);transform-origin:0 0;">Guyane</div>
<div class="t" style="left:756.80px;top:418.65px;font-size:12.7px;color:#2e2e2e;transform:scaleX(0.8959);transform-origin:0 0;">La Réunion</div>
<div class="t" style="left:876.30px;top:418.65px;font-size:12.7px;color:#2e2e2e;transform:scaleX(0.9895);transform-origin:0 0;">Mayotte</div>
<div class="t" style="left:666.50px;top:439.26px;font-size:10.8px;color:#555;transform:scaleX(0.8859);transform-origin:0 0;">Cayenne</div>
<div class="t" style="left:753.50px;top:427.26px;font-size:10.8px;color:#8a8f98;transform:scaleX(0.8670);transform-origin:0 0;">Saint-Denis</div>
<div class="bub" style="left:434.1px;top:447.1px;width:27.8px;height:27.8px"></div>
<div class="t" style="left:438.50px;top:456.26px;font-size:11.8px;color:#1f1f1f;transform:scaleX(0.9650);transform-origin:0 0;">386</div>
<div class="bub" style="left:545.8px;top:446.2px;width:29.6px;height:29.6px"></div>
<div class="t" style="left:551.35px;top:456.26px;font-size:11.8px;color:#1f1f1f;transform:scaleX(0.9396);transform-origin:0 0;">418</div>
<div class="bub" style="left:662.9px;top:450.2px;width:21.6px;height:21.6px"></div>
<div class="t" style="left:664.70px;top:456.26px;font-size:11.8px;color:#1f1f1f;transform:scaleX(0.9142);transform-origin:0 0;">121</div>
<div class="bub" style="left:774.8px;top:450.2px;width:21.6px;height:21.6px"></div>
<div class="t" style="left:776.35px;top:456.26px;font-size:11.8px;color:#1f1f1f;transform:scaleX(0.9396);transform-origin:0 0;">109</div>
<div class="bub" style="left:890.6px;top:453.1px;width:14.8px;height:14.8px"></div>
<div class="t" style="left:895.00px;top:455.76px;font-size:11.8px;color:#1f1f1f;transform:scaleX(0.9142);transform-origin:0 0;">7</div>

<!-- ===== 90_taskbar ===== -->
<div class="a" style="left:0px;top:512px;width:960px;height:28px;background:linear-gradient(90deg,#212a20 0%,#252a1e 4%,#2f2d1e 29%,#373422 52%,#3e3a2a 78%,#3b3829 100%);"></div>
<svg class="a" style="left:11px;top:520px;" width="12" height="12" viewBox="0 0 12 12"><path d="M0 1.700L5 1v4.700H0zM5.700 .900L12 0v5.700H5.700zM0 6.400h5V11l-5-.700zM5.700 6.400H12V12l-6.300-.900z" fill="#fff"/></svg>
<div class="a" style="left:33.3px;top:512.5px;width:242.5px;height:27.5px;background:#efefef;"></div>
<svg class="a" style="left:42px;top:519px;" width="13" height="13" viewBox="0 0 13 13"><circle cx="7.800" cy="4.800" r="3.700" fill="none" stroke="#333" stroke-width="1.100"/><path d="M5.200 7.500L1 11.800" stroke="#333" stroke-width="1.300"/></svg>
<div class="t" style="left:62.30px;top:521.13px;font-size:10.6px;color:#2d2d2d;transform:scaleX(0.9698);transform-origin:0 0;">Taper ici pour rechercher</div>
<svg class="a" style="left:286px;top:519.7px;" width="13" height="13" viewBox="0 0 13 13"><circle cx="6.500" cy="6.500" r="4.700" fill="none" stroke="#fff" stroke-width="1.800"/></svg>
<svg class="a" style="left:319px;top:520px;" width="13" height="12" viewBox="0 0 13 12"><rect x="2.500" y="2.500" width="6" height="6.500" fill="none" stroke="#e8e8e8" stroke-width="1.100"/><path d="M1 .800h9M1 10.800h9M11.300 3v6M11.300 .600v1.200" stroke="#e8e8e8" stroke-width="1.100" fill="none"/><path d="M.600 3v5.500" stroke="#e8e8e8" stroke-width="1"/></svg>
<svg class="a" style="left:351px;top:517.4px;" width="17.4" height="17" viewBox="0 0 17.400 17"><defs><linearGradient id="eg1" x1="0" y1="0" x2="1" y2="1"><stop offset="0" stop-color="#35c1f1"/><stop offset="1" stop-color="#0c59a4"/></linearGradient><linearGradient id="eg2" x1="0" y1="0" x2="1" y2="0"><stop offset="0" stop-color="#2ab0e8"/><stop offset="1" stop-color="#6fd64a"/></linearGradient></defs><circle cx="8.700" cy="8.500" r="8.400" fill="url(#eg1)"/><path d="M.500 7.500A8.400 8.400 0 0 1 17 6.500c.300 2.500-1.500 4-3.500 4-2.500 0-2-2-2.300-2.800C10.500 5.500 8 4.500 6 5 3 5.700 1 7 .500 7.500z" fill="url(#eg2)"/><path d="M6.500 8.500c-1 3 1.500 6.500 6 6.500 1.500 0 3-.800 3.500-1.500-2 3.500-6.500 4.500-9.500 2C3.500 13 4 9.500 6.500 8.500z" fill="#0b4f99"/></svg>
<svg class="a" style="left:382px;top:519px;" width="16" height="13.5" viewBox="0 0 16 13.5"><path d="M0 1.200a.8.800 0 0 1 .8-.8H5.500L7 2H15.200a.8.800 0 0 1 .8.800V4H0z" fill="#e8a317"/><rect x="0" y="3" width="16" height="10.300" rx=".6" fill="#ffd863"/><rect x="4.500" y="7.200" width="7" height="6.100" fill="#3b95e0"/><rect x="6.500" y="10.200" width="3" height="3.100" fill="#ffd863"/></svg>
<svg class="a" style="left:411.5px;top:517.4px;" width="17" height="16.6" viewBox="0 0 17 16.6"><path d="M5 5V3.200A2.200 2.200 0 0 1 7.200 1h2.600A2.200 2.200 0 0 1 12 3.200V5" fill="none" stroke="#f2f2f2" stroke-width="1.100"/><path d="M.5 4.800H16.500V15.800a.8.800 0 0 1-.8.800H1.300a.8.800 0 0 1-.8-.8z" fill="#f2f2f2"/><rect x="5.400" y="7.500" width="2.700" height="2.700" fill="#f25022"/><rect x="8.800" y="7.500" width="2.700" height="2.700" fill="#7fba00"/><rect x="5.400" y="10.900" width="2.700" height="2.700" fill="#00a4ef"/><rect x="8.800" y="10.900" width="2.700" height="2.700" fill="#ffb900"/></svg>
<svg class="a" style="left:442px;top:517.5px;" width="17" height="17" viewBox="0 0 17 17"><defs><radialGradient id="ff" cx=".7" cy=".2" r=".9"><stop offset="0" stop-color="#ffd43b"/><stop offset=".5" stop-color="#ff8a16"/><stop offset="1" stop-color="#e5311c"/></radialGradient></defs><circle cx="8.500" cy="8.500" r="8.200" fill="url(#ff)"/><circle cx="8.800" cy="8" r="4.600" fill="#2f4fb5"/><path d="M3 4c2-1 4 .5 5.500 1.500 1.500 1 3 .5 4 .3-.5 1.500-2 2.500-3.500 2.500 1.500 1.200 3 1 4 .2-.5 3-3 5-6 4.500C4 12.500 2 9 3 4z" fill="#ff9a1a"/><path d="M10 3.200c1.800.6 3 2.200 3.200 4-.8-1-2-1.500-3-1.400-.6-1-.6-1.900-.2-2.600z" fill="#7fc4ea"/></svg>
<div class="a" style="left:472.75px;top:517.75px;width:16.3px;height:16.2px;background:#0b3c7e;"></div>
<div class="t" style="left:477.00px;top:520.99px;font-size:11px;color:#fff;font-weight:bold;transform:scaleX(0.9567);transform-origin:0 0;">B</div>
<div class="a" style="left:485px;top:528.3px;width:1.7px;height:1.7px;background:#2fb4e9;border-radius:50%"></div>
<div class="a" style="left:496px;top:512px;width:30px;height:28px;background:#615e4f;"></div>
<div class="a" style="left:496px;top:538px;width:30px;height:2px;background:#7cbcee;"></div>
<svg class="a" style="left:502.2px;top:517.4px;" width="16.8" height="16.8" viewBox="0 0 16.8 16.8"><circle cx="8.400" cy="8.400" r="8.400" fill="#db4437"/><path d="M8.400 8.400L1.130 4.200A8.400 8.400 0 0 0 8.400 16.800L12.600 9.500z" fill="#0f9d58"/><path d="M8.400 8.400L12.600 9.500 8.400 16.800A8.400 8.400 0 0 0 15.670 4.200H8.400z" fill="#ffcd40"/><circle cx="8.400" cy="8.400" r="3.900" fill="#f1f1f1"/><circle cx="8.400" cy="8.400" r="3.100" fill="#4285f4"/></svg>
<div class="a" style="left:532.75px;top:517.4px;width:16.7px;height:16.3px;background:#000;"></div>
<svg class="a" style="left:537.5px;top:520px;" width="7.2" height="11.5" viewBox="0 0 7.2 11.5"><path d="M0 0H2.300L4.900 7V0H7.200V11.500H4.900L2.300 4.500V11.500H0z" fill="#e50914"/></svg>
<svg class="a" style="left:562.7px;top:517.6px;" width="18" height="15.8" viewBox="0 0 18 15.8"><path d="M0 6L9 0l9 6z" fill="#1068c0"/><rect x="0" y="5.500" width="18" height="10.300" fill="#2a9df4"/><path d="M0 5.500L9 11.500 18 5.500z" fill="#f5f9ff"/><path d="M0 15.800L7 10M18 15.800L11 10" stroke="#1e8ae0" stroke-width=".6"/></svg>
<svg class="a" style="left:593.5px;top:518px;" width="16" height="16" viewBox="0 0 16 16"><circle cx="8" cy="8" r="7.600" fill="#19b1f0"/><circle cx="3.800" cy="3.800" r="3.400" fill="#19b1f0"/><circle cx="12.200" cy="12.200" r="3.400" fill="#19b1f0"/></svg>
<div class="t" style="left:598.00px;top:520.47px;font-size:11.5px;color:#fff;font-weight:bold;transform:scaleX(0.9125);transform-origin:0 0;">S</div>
<svg class="a" style="left:622.8px;top:517.4px;" width="16.8" height="16" viewBox="0 0 16.8 16"><path d="M4.500 .8L15.800 .3a.8.8 0 0 1 .8.8V14.800a.8.8 0 0 1-.8.8L4.500 15.200z" fill="#f1f4f3" stroke="#aab8b4" stroke-width=".6"/><path d="M10 3.500h5M10 6h5M10 8.500h5M10 11h5" stroke="#93aaa5" stroke-width="1.100"/><path d="M.3 3.600L9 2.600V13.400L.3 12.400z" fill="#6f9c98"/><path d="M2.300 5.500h4.400v5H2.300z" fill="#e6efed"/><path d="M3.200 7h2.600M3.200 8.500h2.600" stroke="#6f9c98" stroke-width=".7"/></svg>
<svg class="a" style="left:653.4px;top:517.4px;" width="17" height="16" viewBox="0 0 17 16"><path d="M4.500 .8L16 .3a.8.8 0 0 1 .8.8V14.800a.8.8 0 0 1-.8.8L4.500 15.200z" fill="#f4f9f1" stroke="#86b878" stroke-width=".7"/><path d="M9.500 3h6.500M9.500 6h6.500M9.500 9h6.500M9.500 12h6.500M12.700 1.500v13" stroke="#7cb56c" stroke-width="1"/><path d="M.3 3.600L9.300 2.600V13.400L.3 12.400z" fill="#3d9444"/><path d="M2.600 5.400L6.800 10.600M6.800 5.400L2.600 10.600" stroke="#fff" stroke-width="1.400"/></svg>
<svg class="a" style="left:683.4px;top:517.4px;" width="16.5" height="16" viewBox="0 0 16.5 16"><path d="M4.500 .8L15.500 .3a.8.8 0 0 1 .8.8V14.800a.8.8 0 0 1-.8.8L4.500 15.200z" fill="#f2f5fc" stroke="#8ea8de" stroke-width=".7"/><path d="M10 3.500h5M10 6h5M10 8.500h5M10 11h5" stroke="#7f9fe0" stroke-width="1"/><path d="M.3 3.600L9.300 2.600V13.400L.3 12.400z" fill="#3f6ac2"/><path d="M2 5.600l1.200 4.800L4.700 6.800 6.200 10.400 7.400 5.600" stroke="#fff" stroke-width="1.100" fill="none"/></svg>
<div class="a" style="left:680.25px;top:538px;width:19px;height:2px;background:#7cbcee;"></div>
<div class="a" style="left:699.8px;top:538px;width:3.7px;height:2px;background:#7cbcee;"></div>
<svg class="a" style="left:714px;top:517px;" width="16" height="17" viewBox="0 0 16 17"><rect x="1" y="7" width="11" height="8.500" rx="1" fill="#c8232c"/><rect x="2.500" y="4.500" width="3.500" height="6" fill="#3a7be0"/><rect x="6" y="3" width="3.500" height="7" fill="#2fae4a" transform="rotate(12 7.700 6.500)"/><rect x="9" y="5" width="3.500" height="6" fill="#f2b824"/><rect x="9.500" y="1" width="4.500" height="2" fill="#d94bd0" transform="rotate(35 11.700 2)"/><rect x="1" y="11.500" width="11" height="4" rx="1" fill="#a51a22"/><rect x="6" y="10.500" width="4" height="2.200" fill="#7b3fc0"/><circle cx="14" cy="10.500" r=".800" fill="#36c6e8"/></svg>
<div class="a" style="left:710.25px;top:538px;width:23.5px;height:2px;background:#7cbcee;"></div>
<svg class="a" style="left:747.5px;top:520px;" width="16" height="11.8" viewBox="0 0 16 11.8"><defs><linearGradient id="cl" x1="0" y1="0" x2="0" y2="1"><stop offset="0" stop-color="#f4fbff"/><stop offset="1" stop-color="#8cc8f2"/></linearGradient></defs><path d="M4 11.500a3.500 3.500 0 0 1-.5-7A4.500 4.500 0 0 1 12 3.500a4 4 0 0 1 .5 8z" fill="url(#cl)"/></svg>
<svg class="a" style="left:776px;top:523px;" width="10" height="6" viewBox="0 0 10 6"><path d="M.700 5.300L5 1l4.300 4.300" fill="none" stroke="#fff" stroke-width="1.100"/></svg>
<svg class="a" style="left:793px;top:519.7px;" width="10" height="12.5" viewBox="0 0 10 12.5"><rect x="1.500" y="3.500" width="5" height="5.500" rx="1" fill="none" stroke="#fff" stroke-width="1"/><path d="M6.500 5.500l2.200-1.200v4l-2.200-1.200" fill="none" stroke="#fff" stroke-width=".9"/><path d="M2 1.500Q4.500 0 7 1.500M2 11Q4.500 12.500 7 11" fill="none" stroke="#fff" stroke-width=".9"/></svg>
<svg class="a" style="left:808.5px;top:522px;" width="12" height="8" viewBox="0 0 12 8"><path d="M3 7.800a2.600 2.600 0 0 1-.3-5.200A3.300 3.300 0 0 1 8.800 2.200 2.900 2.900 0 0 1 9.300 7.800z" fill="#f2f2f2"/></svg>
<svg class="a" style="left:826px;top:521.5px;" width="12" height="8.5" viewBox="0 0 12 8.5"><rect x="3" y="2.500" width="8" height="5" fill="none" stroke="#fff" stroke-width="1"/><rect x="4.300" y="3.800" width="5.400" height="2.400" fill="#fff"/><path d="M1.500 0v3.500M.300 1h2.400M1.500 3.500V6" stroke="#fff" stroke-width=".9" fill="none"/><rect x="11.200" y="4" width=".800" height="2" fill="#fff"/></svg>
<svg class="a" style="left:844px;top:521.3px;" width="9.5" height="9.5" viewBox="0 0 9.5 9.5"><path d="M1 9A8 8 0 0 1 9 1" fill="none" stroke="#fff" stroke-width="1"/><path d="M3.300 9A5.700 5.700 0 0 1 9 3.300" fill="none" stroke="#fff" stroke-width="1"/><path d="M5.600 9A3.400 3.400 0 0 1 9 5.600" fill="none" stroke="#fff" stroke-width="1"/><circle cx="8.300" cy="8.300" r="1" fill="#fff"/></svg>
<svg class="a" style="left:859px;top:520.8px;" width="12.5" height="10" viewBox="0 0 12.5 10"><path d="M.600 3.500H2.800L5.300 1V9L2.800 6.500H.600z" fill="none" stroke="#fff" stroke-width=".9"/><path d="M7 3.300Q8.200 5 7 6.700M8.700 2Q10.700 5 8.700 8M10.400 .800Q13 5 10.400 9.200" fill="none" stroke="#fff" stroke-width=".8"/></svg>
<div class="t" style="left:888.70px;top:515.14px;font-size:8.7px;color:#fff;transform:scaleX(0.8405);transform-origin:0 0;">17:07</div>
<div class="t" style="left:877.90px;top:527.74px;font-size:8.7px;color:#fff;transform:scaleX(0.9209);transform-origin:0 0;">20/09/2021</div>
<svg class="a" style="left:930.5px;top:520px;" width="12.5" height="11" viewBox="0 0 12.5 11"><path d="M.600 .600H11.400V7.800H6.500L4 10.200V7.800H.600z" fill="none" stroke="#fff" stroke-width="1"/><path d="M2.500 2.800h7M2.500 4.500h7M2.500 6.100h4" stroke="#fff" stroke-width=".700"/></svg>
<svg class="a" style="left:937.5px;top:526.5px;" width="9.5" height="9.5" viewBox="0 0 9.5 9.5"><circle cx="4.750" cy="4.750" r="4.200" fill="#2e2c20" stroke="#e8e8e8" stroke-width=".800"/></svg>
<div class="t" style="left:940.35px;top:527.87px;font-size:7px;color:#fff;transform:scaleX(0.9761);transform-origin:0 0;">3</div>
<div class="a" style="left:956px;top:512px;width:1px;height:28px;background:#6a6a60;"></div>

</body></html>
